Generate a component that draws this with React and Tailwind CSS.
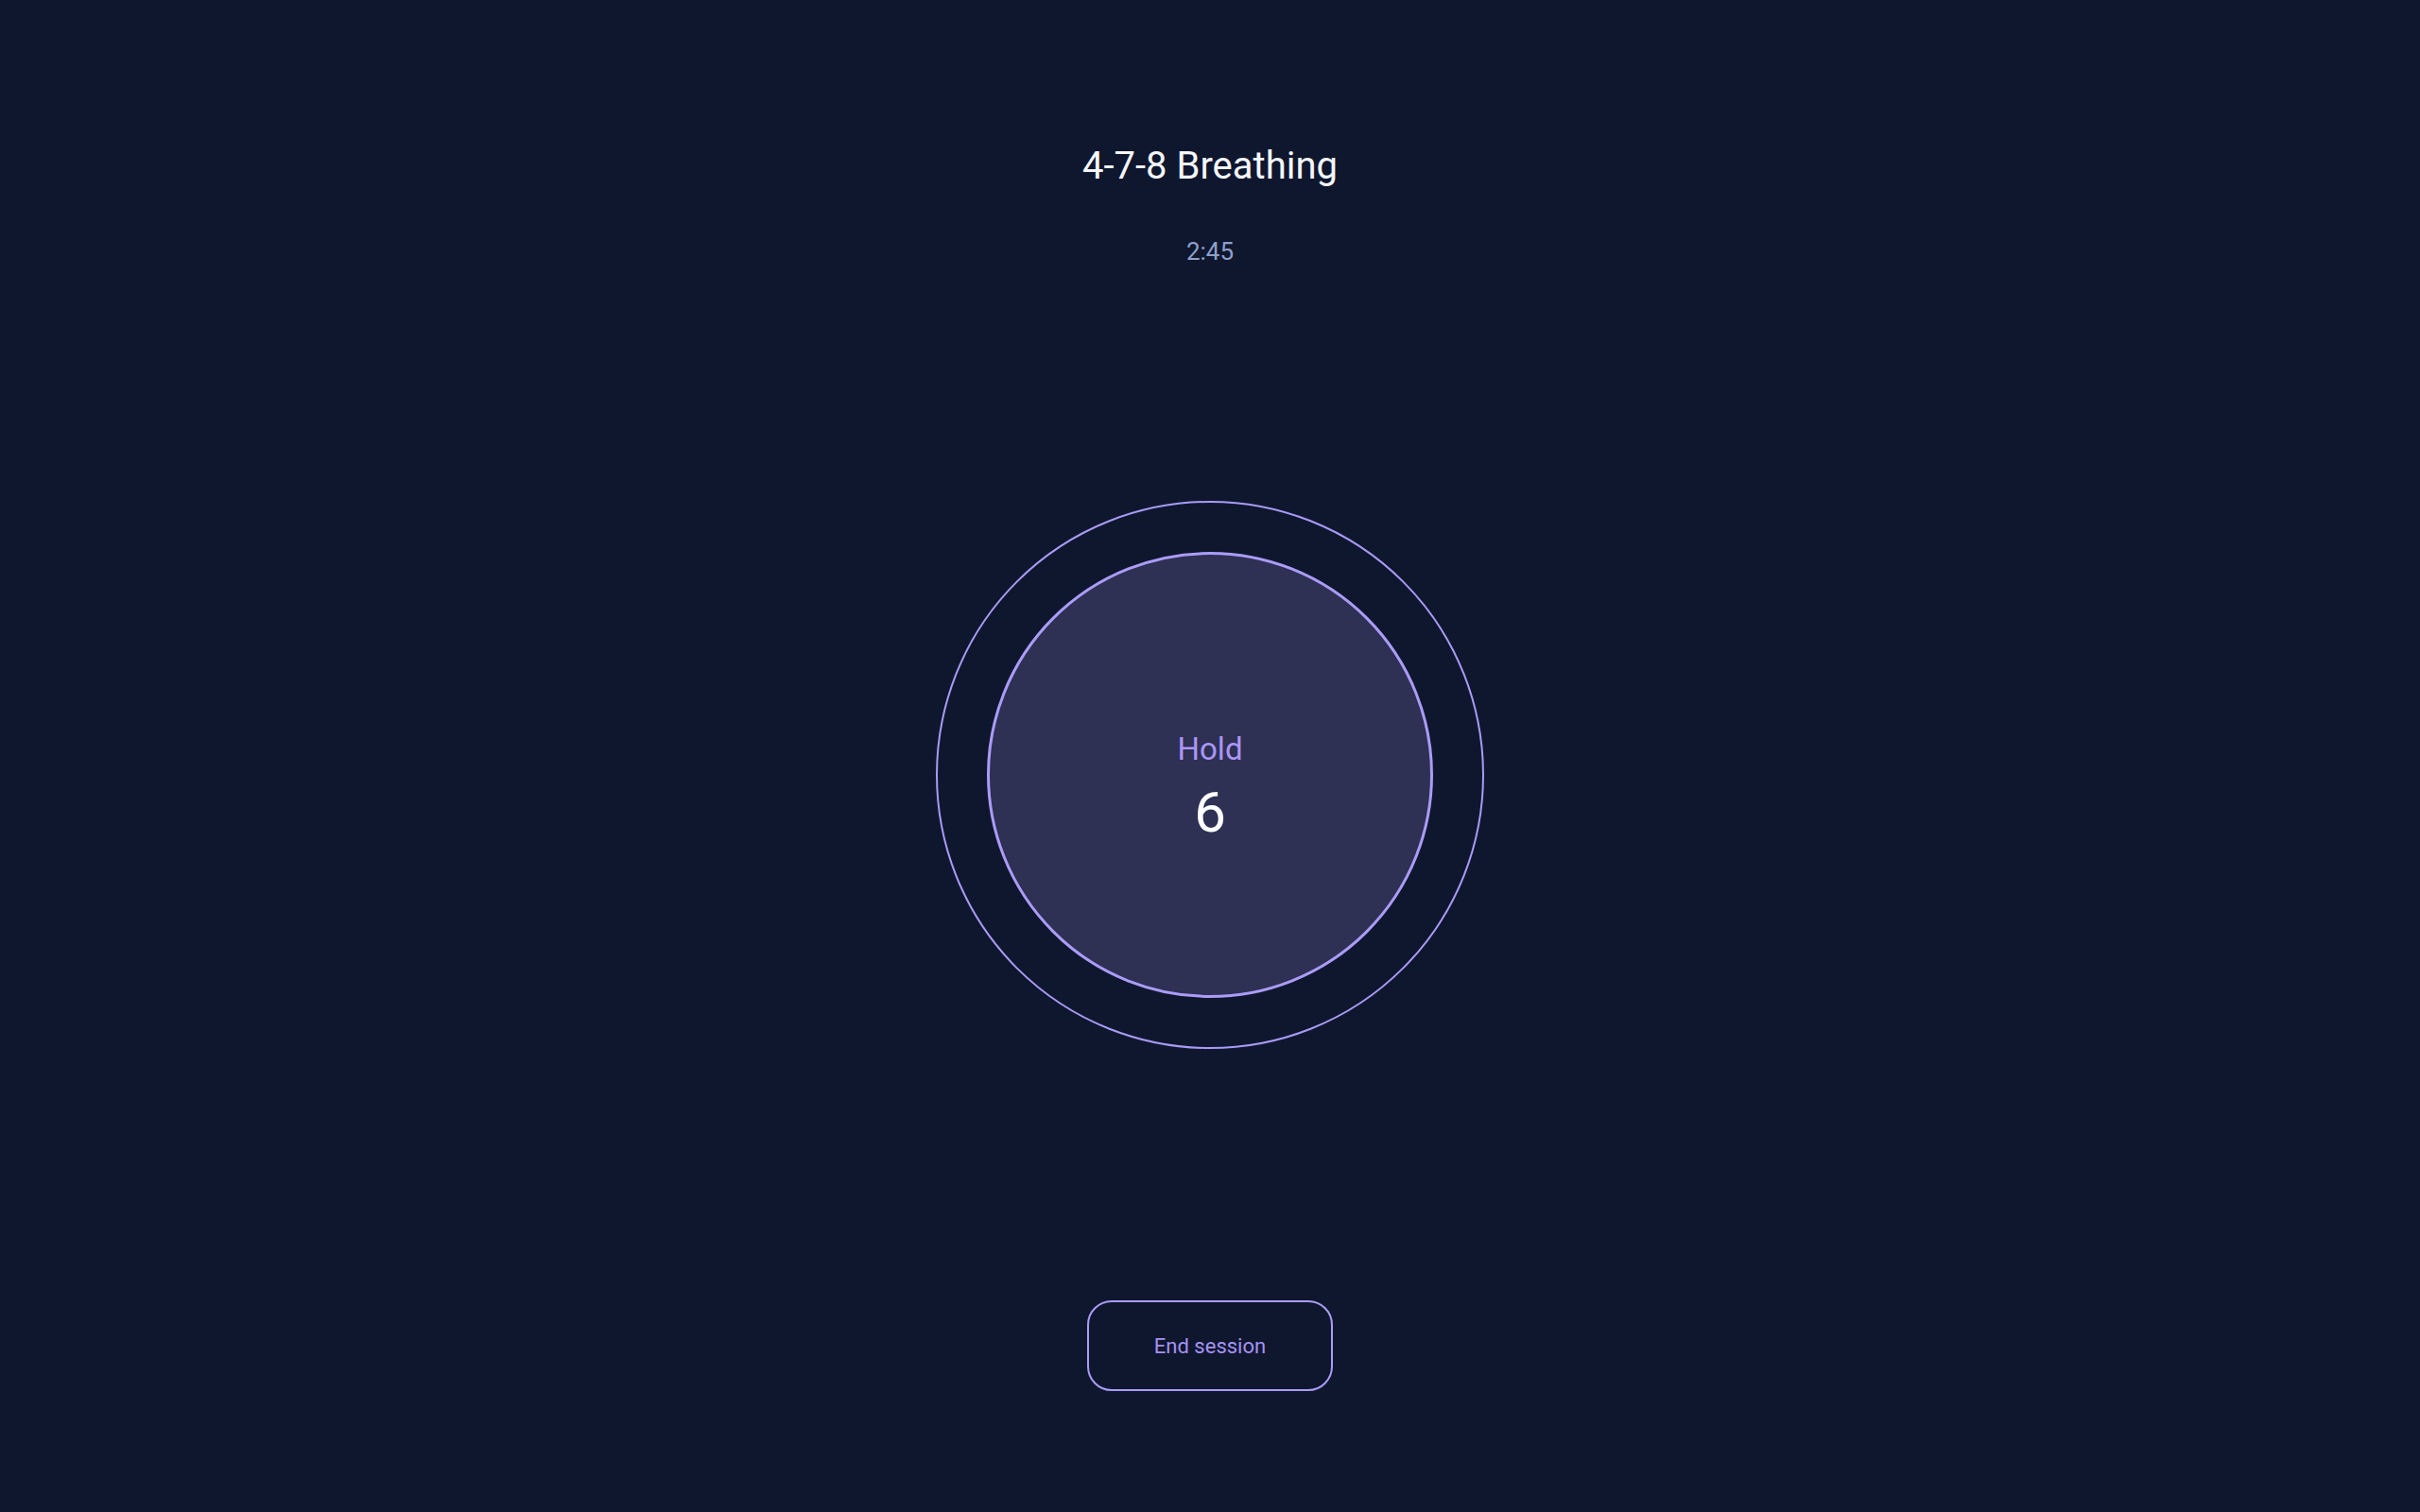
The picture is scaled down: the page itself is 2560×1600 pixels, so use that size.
export default function App() {
  return (
    <div className="min-h-screen w-full bg-[#0f172e] flex flex-col items-center pt-[152px] font-['Roboto',sans-serif]">
      <h1 className="text-[40px] leading-[48px] font-normal text-[#f4f6fb]">4-7-8 Breathing</h1>
      <div className="mt-[51px] text-[26px] leading-[30px] text-[#8ea0cc]">2:45</div>

      <div className="mt-[249px] w-[580px] h-[580px] rounded-full border-2 border-[#a99bf7] flex items-center justify-center">
        <div className="w-[472px] h-[472px] rounded-full border-[3px] border-[#ab9cf8] bg-[#2e3054] flex flex-col items-center justify-center pt-[24px]">
          <div className="text-[33px] leading-[38px] text-[#ab97f5]">Hold</div>
          <div className="mt-[18px] text-[60px] leading-[60px] text-white">6</div>
        </div>
      </div>

      <button className="mt-[266px] w-[260px] h-[96px] rounded-[26px] border-2 border-[#ab9cf8] text-[22px] text-[#a592f2] bg-transparent">
        End session
      </button>
    </div>
  )
}
